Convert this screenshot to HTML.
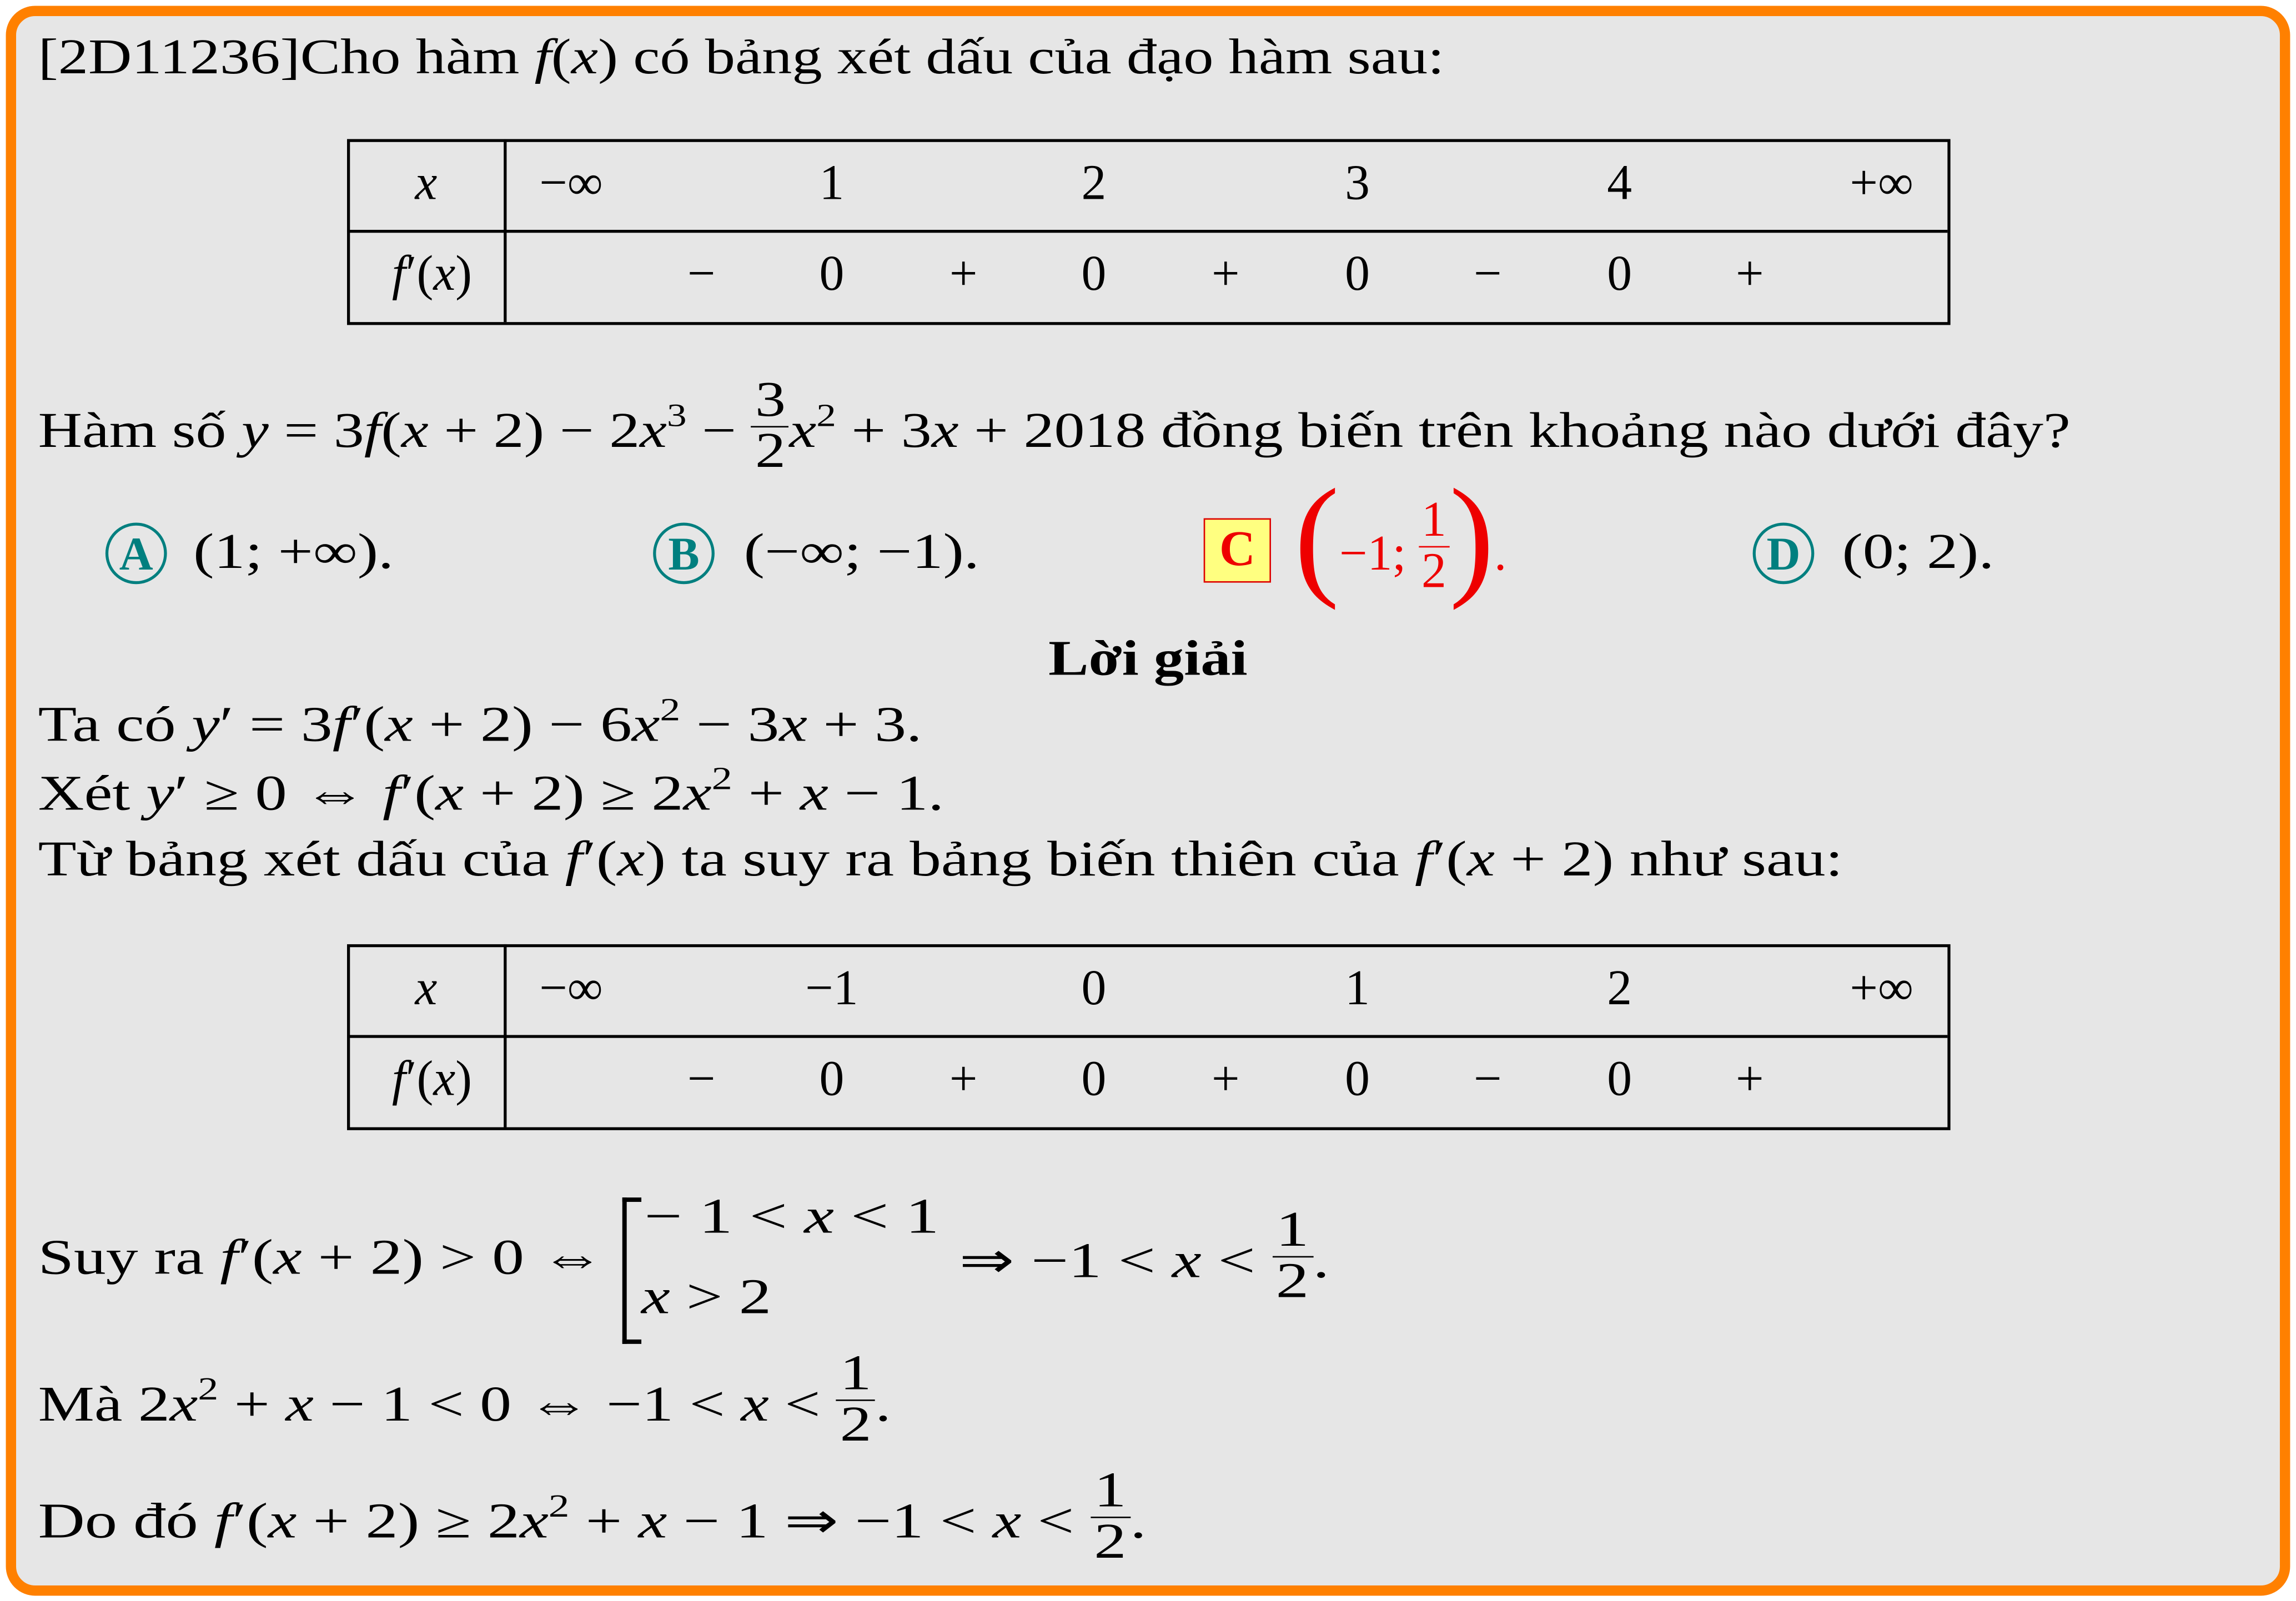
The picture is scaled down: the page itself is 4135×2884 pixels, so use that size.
<!DOCTYPE html>
<html><head><meta charset="utf-8">
<style>
html,body{margin:0;padding:0;background:#fff;}
#wrap{width:4135px;height:2884px;overflow:hidden;position:relative;background:#fff;}
#s{position:absolute;left:0;top:0;width:1568px;height:1094px;transform:scale(2.6371);transform-origin:0 0;}
.box{position:absolute;left:4px;top:4px;width:1546px;height:1072px;border:7px solid #FF8000;border-radius:20px;background:#E6E6E6;}
.t{position:absolute;font-family:"Liberation Serif",serif;font-size:34px;line-height:34px;white-space:nowrap;color:#000;transform-origin:0 0;}
i{font-style:italic;}
sup{font-size:22px;vertical-align:0;position:relative;top:-14px;}
.c{transform:translateX(-50%);}
.fr{display:inline-block;vertical-align:middle;text-align:center;line-height:34px;position:relative;top:-6px;}
.fr span{display:block;padding:0 2px;}
.fr span:first-child{border-bottom:1.5px solid currentColor;}
.line{position:absolute;background:#000;}
.circ{position:absolute;width:38px;height:38px;border:2.5px solid #007F7F;border-radius:50%;color:#007F7F;font-family:"Liberation Serif",serif;font-weight:bold;font-size:32px;line-height:38px;text-align:center;}
</style></head><body>
<div id="wrap"><div id="s">
<div class="box"></div>

<div class="t" style="left:26px;top:23px;transform:scaleX(1.21)">[2D11236]Cho hàm <i>f</i>(<i>x</i>) có bảng xét dấu của đạo hàm sau:</div>

<!-- table 1 -->
<div style="position:absolute;left:237px;top:95px;width:1091px;height:123px;border:2px solid #000;"></div>
<div class="line" style="left:237px;top:157px;width:1093px;height:2px"></div>
<div class="line" style="left:344px;top:95px;width:2px;height:125px"></div>
<div class="t c" style="left:291px;top:109px"><i>x</i></div>
<div class="t c" style="left:295px;top:171px"><i>f</i>′(<i>x</i>)</div>
<div class="t c" style="left:390px;top:109px">−∞</div>
<div class="t c" style="left:568px;top:109px">1</div>
<div class="t c" style="left:747px;top:109px">2</div>
<div class="t c" style="left:927px;top:109px">3</div>
<div class="t c" style="left:1106px;top:109px">4</div>
<div class="t c" style="left:1285px;top:109px">+∞</div>
<div class="t c" style="left:479px;top:171px">−</div>
<div class="t c" style="left:568px;top:171px">0</div>
<div class="t c" style="left:658px;top:171px">+</div>
<div class="t c" style="left:747px;top:171px">0</div>
<div class="t c" style="left:837px;top:171px">+</div>
<div class="t c" style="left:927px;top:171px">0</div>
<div class="t c" style="left:1016px;top:171px">−</div>
<div class="t c" style="left:1106px;top:171px">0</div>
<div class="t c" style="left:1195px;top:171px">+</div>

<div class="t" style="left:26px;top:263px;transform:scaleX(1.226)">Hàm số <i>y</i> = 3<i>f</i>(<i>x</i> + 2) − 2<i>x</i><sup>3</sup> − <span class="fr"><span>3</span><span>2</span></span><i>x</i><sup>2</sup> + 3<i>x</i> + 2018 đồng biến trên khoảng nào dưới đây?</div>

<div class="circ" style="left:72px;top:357px">A</div>
<div class="t" style="left:132px;top:361px;transform:scaleX(1.25)">(1; +∞).</div>
<div class="circ" style="left:446px;top:357px">B</div>
<div class="t" style="left:508px;top:361px;transform:scaleX(1.25)">(−∞; −1).</div>
<div style="position:absolute;left:822px;top:354px;width:44px;height:42px;background:#FFFF80;border:1.5px solid #D00;color:#E00;font:bold 34px/42px 'Liberation Serif',serif;text-align:center;">C</div>
<div class="t" style="left:884px;top:341px;color:#E00"><span style="font-size:92px;position:relative;top:8px;font-weight:100;">(</span>−1; <span class="fr" style="top:-8px"><span>1</span><span>2</span></span><span style="font-size:92px;position:relative;top:8px;">)</span>.</div>
<div class="circ" style="left:1197px;top:357px">D</div>
<div class="t" style="left:1258px;top:361px;transform:scaleX(1.25)">(0; 2).</div>

<div class="t" style="left:716px;top:434px;font-weight:bold;transform:scaleX(1.21)">Lời giải</div>
<div class="t" style="left:26px;top:479px;transform:scaleX(1.27)">Ta có <i>y</i>′ = 3<i>f</i>′(<i>x</i> + 2) − 6<i>x</i><sup>2</sup> − 3<i>x</i> + 3.</div>
<div class="t" style="left:26px;top:526px;transform:scaleX(1.28)">Xét <i>y</i>′ ≥ 0 ⇔ <i>f</i>′(<i>x</i> + 2) ≥ 2<i>x</i><sup>2</sup> + <i>x</i> − 1.</div>
<div class="t" style="left:26px;top:571px;transform:scaleX(1.26)">Từ bảng xét dấu của <i>f</i>′(<i>x</i>) ta suy ra bảng biến thiên của <i>f</i>′(<i>x</i> + 2) như sau:</div>

<!-- table 2 -->
<div style="position:absolute;left:237px;top:645px;width:1091px;height:123px;border:2px solid #000;"></div>
<div class="line" style="left:237px;top:707px;width:1093px;height:2px"></div>
<div class="line" style="left:344px;top:645px;width:2px;height:125px"></div>
<div class="t c" style="left:291px;top:659px"><i>x</i></div>
<div class="t c" style="left:295px;top:721px"><i>f</i>′(<i>x</i>)</div>
<div class="t c" style="left:390px;top:659px">−∞</div>
<div class="t c" style="left:568px;top:659px">−1</div>
<div class="t c" style="left:747px;top:659px">0</div>
<div class="t c" style="left:927px;top:659px">1</div>
<div class="t c" style="left:1106px;top:659px">2</div>
<div class="t c" style="left:1285px;top:659px">+∞</div>
<div class="t c" style="left:479px;top:721px">−</div>
<div class="t c" style="left:568px;top:721px">0</div>
<div class="t c" style="left:658px;top:721px">+</div>
<div class="t c" style="left:747px;top:721px">0</div>
<div class="t c" style="left:837px;top:721px">+</div>
<div class="t c" style="left:927px;top:721px">0</div>
<div class="t c" style="left:1016px;top:721px">−</div>
<div class="t c" style="left:1106px;top:721px">0</div>
<div class="t c" style="left:1195px;top:721px">+</div>

<div class="t" style="left:26px;top:843px;transform:scaleX(1.29)">Suy ra <i>f</i>′(<i>x</i> + 2) &gt; 0 ⇔</div>
<div class="line" style="left:425px;top:818px;width:3px;height:100px"></div>
<div class="line" style="left:425px;top:818px;width:13px;height:3px"></div>
<div class="line" style="left:425px;top:915px;width:13px;height:3px"></div>
<div class="t" style="left:440px;top:815px;transform:scaleX(1.35)">− 1 &lt; <i>x</i> &lt; 1</div>
<div class="t" style="left:438px;top:870px;transform:scaleX(1.3)"><i>x</i> &gt; 2</div>
<div class="t" style="left:655px;top:830px;transform:scaleX(1.33)">⇒ −1 &lt; <i>x</i> &lt; <span class="fr"><span>1</span><span>2</span></span>.</div>

<div class="t" style="left:26px;top:928px;transform:scaleX(1.27)">Mà 2<i>x</i><sup>2</sup> + <i>x</i> − 1 &lt; 0 ⇔ −1 &lt; <i>x</i> &lt; <span class="fr"><span>1</span><span>2</span></span>.</div>
<div class="t" style="left:26px;top:1008px;transform:scaleX(1.30)">Do đó <i>f</i>′(<i>x</i> + 2) ≥ 2<i>x</i><sup>2</sup> + <i>x</i> − 1 ⇒ −1 &lt; <i>x</i> &lt; <span class="fr"><span>1</span><span>2</span></span>.</div>

</div></div>
</body></html>
